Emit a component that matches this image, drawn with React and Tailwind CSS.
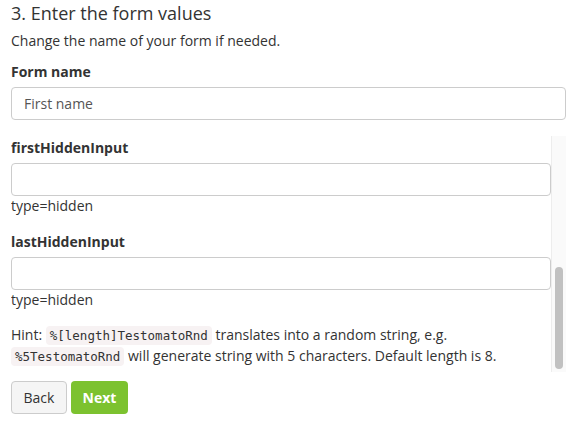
import React from "react";

function HiddenField({ name }) {
  return (
    <div className="flex flex-col">
      <label className="text-[14px] leading-[20px] font-bold">{name}</label>
      <input
        type="text"
        className="mt-[5px] h-[33px] w-full rounded-[4px] border border-[#cccccc] bg-white px-3 text-[14px] outline-none"
      />
      <span className="text-[14px] leading-[20px]">type=hidden</span>
    </div>
  );
}

function Code({ children }) {
  return (
    <code className="rounded-[4px] bg-[#f7f2f3] px-[4px] py-[2px] font-['DejaVu_Sans_Mono',monospace] text-[12.5px] text-[#333]">
      {children}
    </code>
  );
}

export default function App() {
  return (
    <div className="h-[427px] w-[573px] overflow-hidden bg-white pl-[11px] pr-[7px] font-['Open_Sans','Liberation_Sans',sans-serif] text-[#333]">
      <h3 className="pt-[3px] text-[18px] leading-[20px] font-normal">
        3. Enter the form values
      </h3>
      <p className="mt-[8px] text-[14px] leading-[20px]">
        Change the name of your form if needed.
      </p>
      <label className="mt-[11px] block text-[14px] leading-[20px] font-bold">
        Form name
      </label>
      <input
        type="text"
        defaultValue="First name"
        className="mt-[5px] h-[33px] w-full rounded-[4px] border border-[#cccccc] bg-white px-3 text-[14px] text-[#555] outline-none"
      />

      <div className="mt-[16px] flex h-[236px] overflow-hidden">
        <div className="flex-1 pt-[2px]">
          <HiddenField name="firstHiddenInput" />
          <div className="mt-[16px]">
            <HiddenField name="lastHiddenInput" />
          </div>
          <p className="mt-[15px] text-[14px] leading-[20px]">
            Hint: <Code>%[length]TestomatoRnd</Code> translates into a random
            string, e.g. <Code>%5TestomatoRnd</Code> will generate string with 5
            characters. Default length is 8.
          </p>
        </div>
        <div className="flex w-[15px] flex-col border-l border-[#ededed] bg-[#fafafa] px-[3px]">
          <div className="mt-[131px] h-[102px] rounded-full bg-[#c1c1c1]" />
        </div>
      </div>

      <div className="mt-[9px] flex gap-[4px]">
        <button className="h-[33px] w-[56px] rounded-[4px] border border-[#cccccc] bg-[#f5f5f5] text-[14px] text-[#333]">
          Back
        </button>
        <button className="h-[33px] w-[57px] rounded-[4px] bg-[#7cc22f] text-[14px] font-bold text-white">
          Next
        </button>
      </div>
    </div>
  );
}
